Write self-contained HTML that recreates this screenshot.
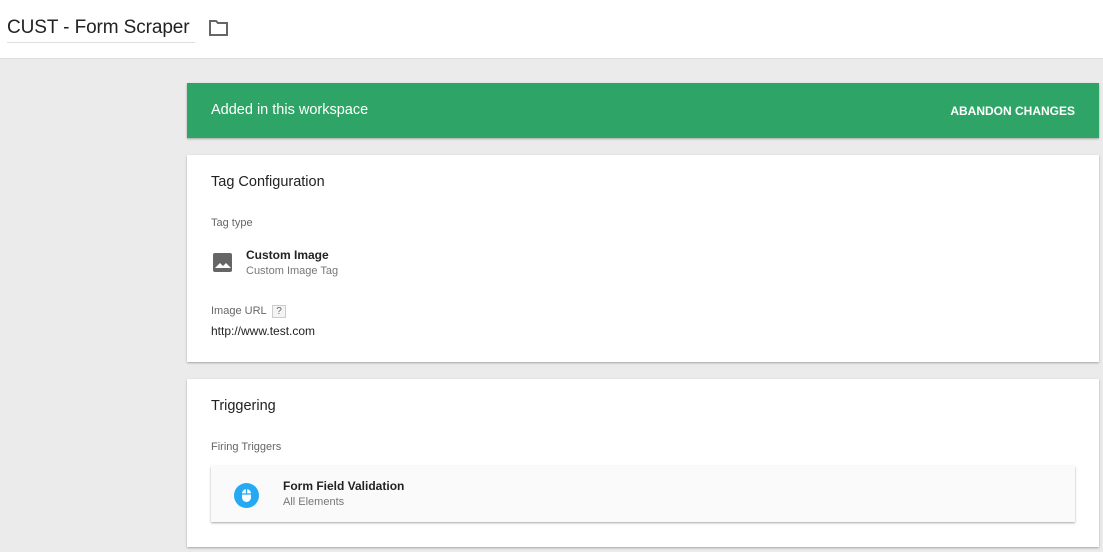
<!DOCTYPE html><html><head><style>
body{margin:0;width:1103px;height:552px;background:#ebebeb;font-family:"Liberation Sans",sans-serif;position:relative;overflow:hidden}
.hdr{position:absolute;left:0;top:0;width:1103px;height:58px;background:#fff;border-bottom:1px solid #ddd}
.t{position:absolute;left:7px;top:17px;font-size:19px;color:#222;border-bottom:1px solid #ddd;padding-bottom:3px;width:188px;white-space:nowrap;letter-spacing:-0.1px}
.card{position:absolute;left:187px;width:912px;background:#fff;box-shadow:0 1px 2px rgba(0,0,0,.3)}
.a{position:absolute;white-space:nowrap}
</style></head><body>
<div class="hdr"><div class="t">CUST - Form Scraper</div>
<svg class="a" style="left:208px;top:19px" width="22" height="18" viewBox="0 0 22 18"><path d="M2 2h6l2 2h9v12H2z" fill="none" stroke="#666" stroke-width="2"/></svg></div>
<div class="card" style="top:83px;height:55px;background:#2ea566"><div class="a" style="left:24px;top:19px;color:#fff;font-size:14.5px">Added in this workspace</div><div class="a" style="right:24px;top:21px;color:#fff;font-size:12px;font-weight:bold">ABANDON CHANGES</div></div>
<div class="card" style="top:155px;height:207px">
<div class="a" style="left:24px;top:19px;font-size:14.5px;color:#222">Tag Configuration</div>
<div class="a" style="left:24px;top:62px;font-size:11px;color:#666">Tag type</div>
<svg class="a" style="left:26px;top:98px" width="20" height="20" viewBox="0 0 20 20"><rect width="19" height="19" rx="2" fill="#666"/><path d="M2 15l5-5 3 3 3-3 5 5z" fill="#fff"/></svg>
<div class="a" style="left:59px;top:93px;font-size:12px;font-weight:bold;color:#222">Custom Image</div>
<div class="a" style="left:59px;top:110px;font-size:11px;color:#777">Custom Image Tag</div>
<div class="a" style="left:24px;top:150px;font-size:11px;color:#666">Image URL <span style="display:inline-block;border:1px solid #ccc;background:#f4f4f4;padding:0 3px;font-size:10px;margin-left:3px">?</span></div>
<div class="a" style="left:24px;top:169px;font-size:12px;color:#222">http://www.test.com</div>
</div>
<div class="card" style="top:379px;height:168px">
<div class="a" style="left:24px;top:19px;font-size:14.5px;color:#222">Triggering</div>
<div class="a" style="left:24px;top:62px;font-size:11px;color:#666">Firing Triggers</div>
<div class="a" style="left:24px;top:87px;width:864px;height:56px;background:#fafafa;box-shadow:0 1px 2px rgba(0,0,0,.35)">
<svg class="a" style="left:23px;top:17px" width="25" height="25" viewBox="0 0 25 25"><circle cx="12.5" cy="12.5" r="12.5" fill="#24a9f2"/><rect x="8" y="6" width="9" height="13" rx="4.5" fill="#fff"/><path d="M8 11h9M12.5 6v5" stroke="#24a9f2" stroke-width="1.3"/></svg>
<div class="a" style="left:72px;top:13px;font-size:12px;font-weight:bold;color:#222">Form Field Validation</div>
<div class="a" style="left:72px;top:30px;font-size:11px;color:#777">All Elements</div>
</div></div>
</body></html>
